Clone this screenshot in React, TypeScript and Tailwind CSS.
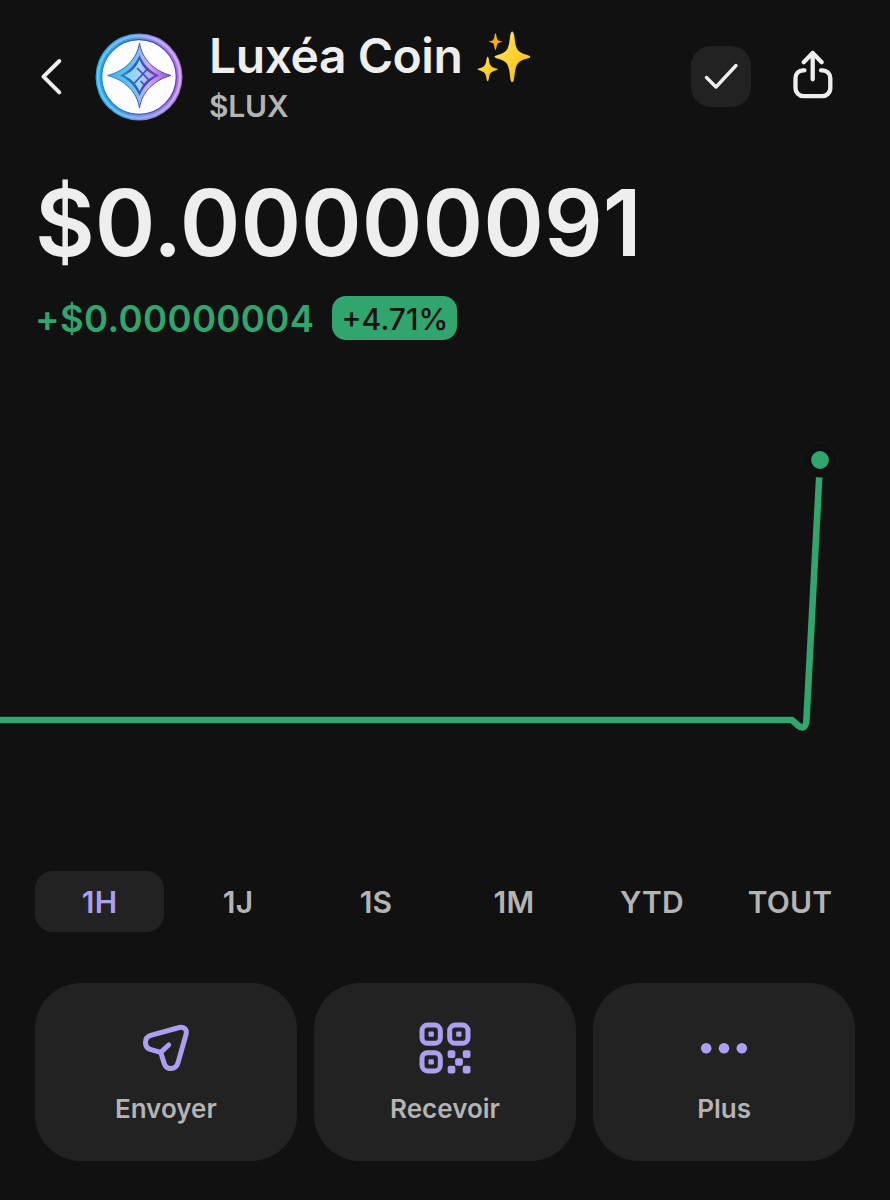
import { useState } from "react";
import clsx from "clsx";

const RANGES = ["1H", "1J", "1S", "1M", "YTD", "TOUT"];

function ChevronIcon() {
  return (
    <svg width="24" height="40" viewBox="0 0 24 40" fill="none" stroke="#eeeeee" strokeWidth="4" strokeLinecap="round" strokeLinejoin="round">
      <path d="M20.3 4 4.5 19.7 20.3 35.4" />
    </svg>
  );
}

function CoinLogo() {
  return (
    <svg width="88" height="88" viewBox="0 0 88 88" fill="none">
      <defs>
        <linearGradient id="rim" x1="0" y1="0.4" x2="1" y2="0.6">
          <stop offset="0" stopColor="#2fa6e0" />
          <stop offset="0.35" stopColor="#3f9fe0" />
          <stop offset="0.6" stopColor="#8f8ae4" />
          <stop offset="1" stopColor="#b070dc" />
        </linearGradient>
        <linearGradient id="rimLight" x1="0" y1="0.6" x2="1" y2="0.4">
          <stop offset="0" stopColor="#55cdf5" />
          <stop offset="0.5" stopColor="#8fb0f2" />
          <stop offset="1" stopColor="#dda6f2" />
        </linearGradient>
        <linearGradient id="star" x1="0" y1="0" x2="1" y2="0">
          <stop offset="0" stopColor="#2a86cc" />
          <stop offset="0.45" stopColor="#2462b4" />
          <stop offset="1" stopColor="#6d38bd" />
        </linearGradient>
        <linearGradient id="starFill" x1="0" y1="0" x2="1" y2="0">
          <stop offset="0" stopColor="#3fb0e2" />
          <stop offset="0.4" stopColor="#6cc4ee" />
          <stop offset="0.65" stopColor="#d3a8f2" />
          <stop offset="1" stopColor="#8a4fd0" />
        </linearGradient>
        <linearGradient id="gem" x1="0" y1="0" x2="1" y2="0">
          <stop offset="0" stopColor="#86d2f4" />
          <stop offset="0.5" stopColor="#a9d4f8" />
          <stop offset="1" stopColor="#c193f2" />
        </linearGradient>
      </defs>
      <circle cx="44" cy="44" r="43.5" fill="url(#rim)" />
      <circle cx="44" cy="44" r="41" stroke="url(#rimLight)" strokeWidth="2.4" />
      <circle cx="44" cy="44" r="37.3" fill="#fdfdff" stroke="url(#star)" strokeWidth="1.3" />
      <path
        d="M44.5 10C47 26 59 38 76 42.5C59 47 47 59 44.5 75C42 59 30 47 12.5 42.5C30 38 42 26 44.5 10Z"
        fill="url(#starFill)"
        stroke="url(#star)"
        strokeWidth="1"
        strokeLinejoin="round"
      />
      <path d="M44.5 22C48 31 55 38 64 42.5C55 47 48 54 44.5 63C41 54 34 47 25 42.5C34 38 41 31 44.5 22Z" fill="url(#star)" />
      <path d="M44.5 28.5C47 34 52 39.5 58 42.5C52 45.5 47 51 44.5 56.5C42 51 37 45.5 31 42.5C37 39.5 42 34 44.5 28.5Z" fill="url(#gem)" stroke="url(#gem)" strokeWidth="1.5" />
      <path d="M42 35 54 47M52.5 36 39.5 50M45.500 48 49.500 52" stroke="#3a4fb4" strokeWidth="1.7" />
    </svg>
  );
}

function Sparkles() {
  return (
    <svg width="54" height="52" viewBox="0 0 54 52" role="img" aria-label="✨">
      <defs>
        <linearGradient id="gold" x1="0" y1="0" x2="1" y2="1">
          <stop offset="0.25" stopColor="#fddc4e" />
          <stop offset="0.55" stopColor="#fbd02c" />
          <stop offset="1" stopColor="#f0b41c" />
        </linearGradient>
      </defs>
      <path
        d="M35.2 0.5C36.6 0.5 37 3 37.4 6C38.6 17 40 20.5 47 23C51 24.4 53.3 24.4 53.3 25.7C53.3 27 51 27.2 47 28.4C40 30.8 38.6 34.5 37.4 45C37 48.5 36.6 51.2 35.2 51.2C33.8 51.2 33.4 48.5 33 45C31.8 34.5 30.5 30.8 23.7 28.4C20 27.2 17.6 27 17.6 25.7C17.6 24.4 20 24.4 23.7 23C30.5 20.5 31.8 17 33 6C33.4 3 33.8 0.5 35.2 0.5Z"
        fill="url(#gold)"
      />
      <path
        d="M10.7 25.7C11.5 25.7 11.7 27.5 12 29.5C12.7 34 13.7 35.5 17 36.8C19 37.5 20.7 37.5 20.7 38.3C20.7 39.1 19 39.2 17 39.9C13.7 41 12.7 42.5 12 46.5C11.7 48.5 11.5 50.2 10.7 50.2C9.9 50.2 9.6 48.5 9.3 46.5C8.6 42.5 7.5 41 4.3 39.9C2.4 39.2 0.6 39.1 0.6 38.3C0.6 37.5 2.4 37.5 4.3 36.8C7.5 35.5 8.6 34 9.3 29.5C9.6 27.5 9.9 25.7 10.7 25.7Z"
        fill="url(#gold)"
      />
      <path
        d="M18.5 2.2C19.5 2.2 19.4 8.6 21.5 9.4C23.5 10.1 25.3 10 25.3 10.6C25.3 11.2 23.5 11.2 21.5 11.9C19.4 12.8 19.5 19 18.5 19C17.5 19 17.6 12.8 15.5 11.9C13.5 11.2 11.7 11.2 11.7 10.6C11.7 10 13.5 10.1 15.5 9.4C17.6 8.6 17.5 2.2 18.5 2.2Z"
        fill="#f5ac1b"
      />
    </svg>
  );
}

function CheckIcon() {
  return (
    <svg width="36" height="30" viewBox="0 0 36 30" fill="none" stroke="#eeeeee" strokeWidth="3.4" strokeLinecap="round" strokeLinejoin="round">
      <path d="M3.5 15.5 13 25 33 3.5" />
    </svg>
  );
}

function ShareIcon() {
  return (
    <svg width="42" height="50" viewBox="0 0 42 50" fill="none" stroke="#eeeeee" strokeWidth="4.3" strokeLinecap="round" strokeLinejoin="round">
      <path d="M20.7 4V30.3M11.7 13.3 20.7 4 29.7 13.3" />
      <path d="M12.5 21.3H11A7.7 7.7 0 0 0 3.5 29V39A8 8 0 0 0 11.5 47.2H30A8 8 0 0 0 38.3 39V29A7.7 7.7 0 0 0 30.5 21.3H29" />
    </svg>
  );
}

function SendIcon() {
  return (
    <svg width="52" height="52" viewBox="0 0 156 156" fill="none" stroke="#ab9ff2" strokeWidth="15" strokeLinecap="round" strokeLinejoin="round">
      <path d="M62 91 33 83C11 77 11 47 32 40L118 16.5C131 13 142 23 138.5 36L113.5 124C107 144 79 145 73 125L62 91 86 69" />
    </svg>
  );
}

function QrIcon() {
  return (
    <svg width="52" height="52" viewBox="0 0 156 156" fill="#ab9ff2">
      <g fill="none" stroke="#ab9ff2" strokeWidth="15">
        <rect x="9" y="9" width="55" height="55" rx="17" />
        <rect x="92" y="9" width="55" height="55" rx="17" />
        <rect x="9" y="92" width="55" height="55" rx="17" />
      </g>
      <rect x="28.5" y="28.5" width="16" height="16" rx="4" />
      <rect x="111.5" y="28.5" width="16" height="16" rx="4" />
      <rect x="28.5" y="111.5" width="16" height="16" rx="4" />
      <rect x="86" y="85" width="23" height="23" rx="6" />
      <rect x="131.5" y="85" width="23" height="23" rx="6" />
      <rect x="108.5" y="108.5" width="23" height="23" rx="6" />
      <rect x="86" y="131.5" width="23" height="23" rx="6" />
      <rect x="131.5" y="131.5" width="23" height="23" rx="6" />
    </svg>
  );
}

function MoreIcon() {
  return (
    <svg width="52" height="52" viewBox="0 0 52 52" fill="#ab9ff2">
      <circle cx="8.2" cy="26.3" r="5.3" />
      <circle cx="26" cy="26.3" r="5.3" />
      <circle cx="43.8" cy="26.3" r="5.3" />
    </svg>
  );
}

const ACTIONS = [
  { label: "Envoyer", icon: <SendIcon /> },
  { label: "Recevoir", icon: <QrIcon /> },
  { label: "Plus", icon: <MoreIcon /> },
];

function PriceChart() {
  return (
    <svg className="block" width="890" height="340" viewBox="0 420 890 340" fill="none">
      <path
        d="M0 720H792L797.5 725C803 730 806.3 727 806.5 719L819.2 477"
        stroke="#31a56e"
        strokeWidth="6.6"
      />
      <circle cx="820" cy="460" r="17" fill="#0f0f0f" stroke="#161616" />
      <circle cx="820" cy="460" r="8.9" fill="#31a56e" />
    </svg>
  );
}

export default function App() {
  const [range, setRange] = useState("1H");

  return (
    <main className="h-[1200px] w-[890px] overflow-hidden bg-[#111111] font-['Inter',sans-serif] text-[#eeeeee]">
      {/* Header */}
      <header className="flex h-[152px] pl-[39px]">
        <button className="mt-[57px] h-10 w-6" aria-label="Retour">
          <ChevronIcon />
        </button>
        <div className="mt-[33px] ml-8">
          <CoinLogo />
        </div>
        <div className="mt-[27px] ml-[26px] flex-1">
          <div className="flex">
            <h1 className="text-[48px] leading-[58px] font-semibold tracking-[-0.45px] whitespace-nowrap">Luxéa Coin</h1>
            <span className="mt-1 ml-[15px]">
              <Sparkles />
            </span>
          </div>
          <p className="text-[30px] leading-[42px] font-semibold tracking-[-0.2px] text-[#b4b4b4]">$LUX</p>
        </div>
        <button className="mt-[46px] flex h-[61px] w-[60px] items-center justify-center rounded-[20px] bg-[#222222]" aria-label="Vérifié">
          <CheckIcon />
        </button>
        <button className="mt-[49px] mr-[56px] ml-[41px] h-[50px] w-[42px]" aria-label="Partager">
          <ShareIcon />
        </button>
      </header>

      {/* Price */}
      <section className="h-[268px] pl-[35px]">
        <p className="pt-[15px] text-[92px] leading-[112px] font-semibold">$0.00000091</p>
        <div className="mt-[17px] flex items-center">
          <span className="pt-0.5 text-[36.5px] leading-[42px] font-semibold tracking-[0.38px] text-[#31a56e]">+$0.00000004</span>
          <span className="ml-[18px] flex h-11 w-[125px] items-center justify-center rounded-[14px] bg-[#31a56e] pt-0.5 text-[30px] font-medium text-[#111111]">
            +4.71%
          </span>
        </div>
      </section>

      <PriceChart />

      {/* Range */}
      <nav className="mt-[111px] flex gap-[9px] pl-[35px]">
        {RANGES.map((item) => (
          <button
            key={item}
            onClick={() => setRange(item)}
            className={clsx(
              "h-[61px] w-[129px] rounded-[18px] pt-px text-[30px] font-semibold tracking-[0.2px]",
              range === item ? "bg-[#222222] text-[#ab9ff2]" : "pl-px text-[#b4b4b4]"
            )}
          >
            {item}
          </button>
        ))}
      </nav>

      {/* Actions */}
      <div className="mt-[51px] grid grid-cols-3 gap-[17.5px] pr-[35px] pl-[35px]">
        {ACTIONS.map(({ label, icon }) => (
          <button key={label} className="flex h-[178px] flex-col items-center rounded-[46px] bg-[#222222] pt-[39px]">
            {icon}
            <span className="mt-[19.4px] text-[26px] leading-8 font-semibold text-[#b4b4b4]">{label}</span>
          </button>
        ))}
      </div>
    </main>
  );
}
